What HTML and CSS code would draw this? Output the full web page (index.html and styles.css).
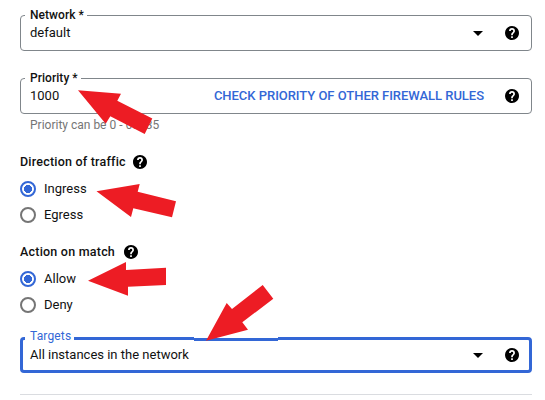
FILE: index.html
```html
<!DOCTYPE html>
<html lang="en">
<head>
<meta charset="utf-8">
<title>Firewall rule</title>
<link rel="stylesheet" href="styles.css">
</head>
<body>
<svg width="0" height="0" class="defs">
  <symbol id="help" viewBox="2 2 20 20"><path d="M12 2C6.48 2 2 6.48 2 12s4.48 10 10 10 10-4.48 10-10S17.52 2 12 2zm1.2 17h-2.4v-2.4h2.4V19zm2.1-7.6-.9.9c-.7.7-1.2 1.4-1.2 2.9h-2.4v-.6c0-1.1.5-2.1 1.200-2.800l1.200-1.300c.4-.3.6-.8.6-1.400a1.800 1.800 0 0 0-3.600 0H7.800a4.200 4.200 0 0 1 8.400 0c0 .9-.4 1.700-.9 2.300z"/></symbol>
</svg>
<form class="form">
  <div class="field">
    <label class="label w-network">Network *</label>
    <span class="value">default</span>
    <span class="caret"></span>
    <svg class="help"><use href="#help"/></svg>
  </div>
  <div class="field priority">
    <label class="label w-priority">Priority *</label>
    <span class="value">1000</span>
    <a class="link">CHECK PRIORITY OF OTHER FIREWALL RULES</a>
    <svg class="help"><use href="#help"/></svg>
  </div>
  <div class="hint">Priority can be 0 - 65535</div>
  <div class="group">
    <div class="heading"><span class="w-direction">Direction of traffic</span><svg class="help"><use href="#help"/></svg></div>
    <div class="option"><span class="radio checked"></span><span>Ingress</span></div>
    <div class="option"><span class="radio"></span><span>Egress</span></div>
  </div>
  <div class="group">
    <div class="heading"><span class="w-action">Action on match</span><svg class="help"><use href="#help"/></svg></div>
    <div class="option"><span class="radio checked"></span><span>Allow</span></div>
    <div class="option"><span class="radio"></span><span>Deny</span></div>
  </div>
  <div class="field focused">
    <label class="label w-targets">Targets</label>
    <span class="value">All instances in the network</span>
    <span class="caret"></span>
    <svg class="help"><use href="#help"/></svg>
    <span class="step"></span>
  </div>
  <hr class="divider">
</form>
<svg class="arrows" viewBox="0 0 545 400">
  <path d="M78 90.200 121 93.700 117.300 100.700 152.300 118.500 144.700 134 110.300 116.300 105.700 123.700Z"/>
  <path d="M96.500 191.300 139.700 184 137.700 191.700 176 201.300 172 217.300 133.300 208.300 131 217Z"/>
  <path d="M88 280.700 126 262 126 270 166 267.700 166 285 128 286.700 128 295.700Z"/>
  <path d="M206 340.700 226.700 303 232 309 262.700 285 273.300 298.700 242.300 322.300 248 329.700Z"/>
</svg>
</body>
</html>
```

FILE: styles.css
```css
* { box-sizing: border-box; }
body {
  margin: 0;
  width: 545px;
  height: 400px;
  overflow: hidden;
  position: relative;
  background: #fff;
  color: #111;
  font: 13px/16px Roboto, sans-serif;
}
.defs { position: absolute; }
.form { padding: 15px 13px 0 20px; }
.field {
  position: relative;
  display: flex;
  align-items: center;
  height: 36px;
  padding: 0 12px 0 9px;
  border: 1px solid #80868b;
  border-radius: 4px;
}
.priority { margin-top: 27px; }
.label {
  position: absolute;
  left: 4px;
  top: -9px;
  padding-left: 5px;
  background: #fff;
  font-size: 12px;
  font-weight: 500;
  letter-spacing: .05px;
  white-space: nowrap;
}
.w-network { width: 62px; }
.w-priority { width: 56px; }
.value { flex: 1; white-space: nowrap; }
.caret {
  border: 5px solid transparent;
  border-top-color: #000;
  border-bottom: 0;
  margin-right: 22px;
}
.help { width: 14px; height: 14px; fill: #000; flex: none; display: block; }
.link {
  color: #3367d6;
  font-weight: 500;
  letter-spacing: -.03px;
  margin-right: 21px;
  white-space: nowrap;
}
.hint { margin: 3px 0 0 10px; color: #757575; font-size: 12px; }
.group { margin-top: 21px; }
.group + .group { margin-top: 16px; }
.heading { display: flex; align-items: center; height: 16px; font-size: 12.500px; font-weight: 500; margin-bottom: 6px; white-space: nowrap; }
.w-direction { width: 113px; letter-spacing: .21px; }
.w-action { width: 104px; letter-spacing: .22px; }
.option { display: flex; align-items: center; gap: 8px; height: 26px; }
.radio {
  width: 16px;
  height: 16px;
  border: 2px solid #757575;
  border-radius: 50%;
}
.checked { border-color: #3367d6; background: radial-gradient(circle, #3367d6 3.800px, transparent 4.300px); }
.focused { margin-top: 19px; border: 3px solid #3367d6; padding: 0 10px 0 7px; }
.focused .label { left: 2px; top: -12px; width: 49px; color: #3367d6; font-weight: 400; letter-spacing: .15px; }
.step {
  position: absolute;
  left: 171px;
  top: -3px;
  width: 84px;
  height: 4px;
  background: #3367d6;
  border-top: 1px solid #fff;
}
.divider { margin: 21px 0 0; border: 0; height: 1px; background: #dadce0; }
.arrows { position: absolute; left: 0; top: 0; width: 545px; height: 400px; fill: #ed1c24; pointer-events: none; }
```
